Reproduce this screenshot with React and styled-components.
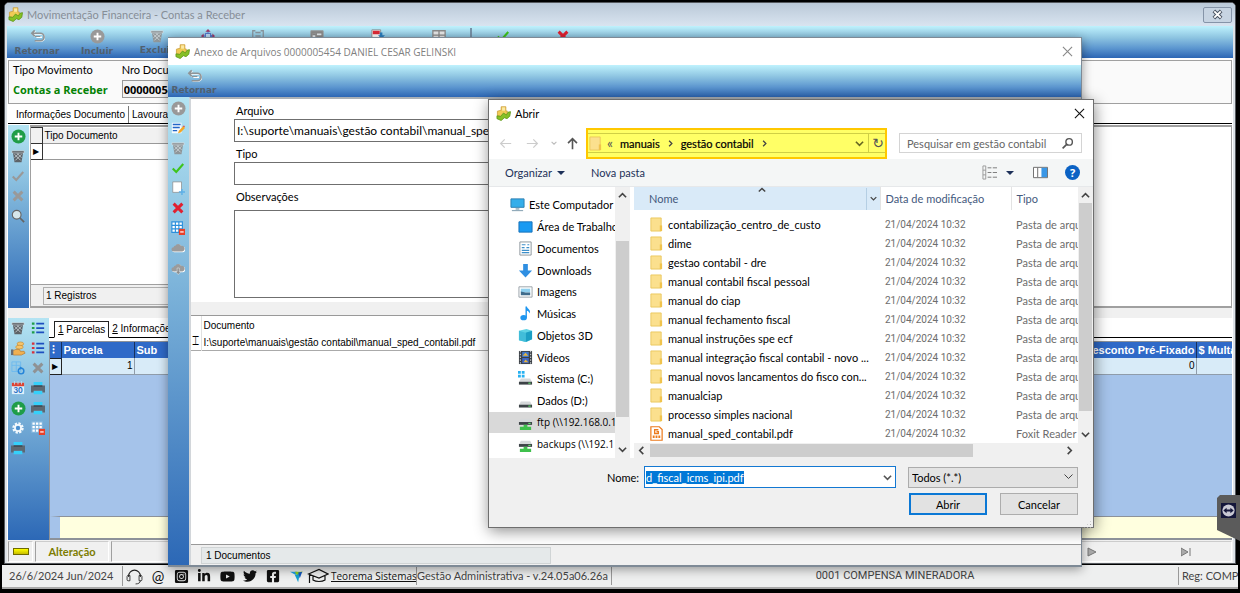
import React, { useEffect, useRef } from 'react'
import styled, { createGlobalStyle, css } from 'styled-components'
import { FaFacebookSquare, FaInstagramSquare, FaLinkedinIn, FaTwitter, FaYoutube } from 'react-icons/fa'

const FONTS = {
  UI: 'Lato, "Open Sans", sans-serif',
  DATA: 'Roboto, "Open Sans", sans-serif',
  FORM: '"Open Sans", "Noto Sans", sans-serif',
  GRID: '"Liberation Sans", Arial, sans-serif',
  TOOLBAR: '"DejaVu Sans", Verdana, sans-serif',
}

const COLORS = {
  FACE: '#f0f0f0',
  LINE: '#a0a0a0',
  GRADIENT: 'linear-gradient(#bff2fd 0%, #8fc6e2 35%, #5b95cf 70%, #2c66b4 100%)',
  SIDE_GRADIENT: 'linear-gradient(#b4e4f3, #7db4da 40%, #2c68b6)',
}

const GlobalStyle = createGlobalStyle`
  * {
    box-sizing: border-box;
  }

  body {
    margin: 0;
    background: #000;
    font-family: ${FONTS.UI};
    font-size: 11px;
    color: #000;
    overflow: hidden;
  }

  button, input, select, textarea {
    font: inherit;
    color: inherit;
    border-radius: 0;
    margin: 0;
  }
`

/* ---------- icons ---------- */

const Svg = ({ size = 14, box = 16, children }) => (
  <svg width={size} height={size} viewBox={`0 0 ${box} ${box}`} fill="none" aria-hidden="true">{children}</svg>
)

const LogoIcon = () => (
  <Svg size={15}>
    <path d="M5.500 .8h5v4.500H12v4l-5 2.500-5.500-1.500V5.500l4-1z" fill="#f0cb55" stroke="#c99a35" strokeWidth=".8" />
    <path d="M6.500 1.500h3.200V5H6.500z" fill="#fbe9a5" />
    <path d="M1 10.500l4 .5 3-3.500 3 2 2-3 2.500-.5-.8 5-3 2.500-2.700-1-3.500 3L1 13.500z" fill="#86c026" stroke="#5b9416" strokeWidth=".8" />
  </Svg>
)

const UndoIcon = () => (
  <Svg size={15}>
    <path d="M2 4.500h9a3.200 3.200 0 0 1 0 7.500H5M5 1.500L2 4.500l3 3M12 8H6" stroke="#fff" strokeWidth="1.500" transform="translate(.8 .8)" />
    <path d="M2 4.500h9a3.500 3.500 0 0 1 0 8H5M5 1.500L2 4.500l3 3" stroke="#8f9496" strokeWidth="1.800" />
    <path d="M5 8h6" stroke="#8f9496" strokeWidth="1.200" />
  </Svg>
)

const PlusIcon = ({ color = '#1f9d48' }) => (
  <Svg size={15}>
    <circle cx="8" cy="8" r="7.500" fill={color} />
    <path d="M8 4v8M4 8h8" stroke="#fff" strokeWidth="2" />
  </Svg>
)

const TrashIcon = ({ color = '#5d6368' }) => (
  <Svg>
    <path d="M2 3h12l-2 12H4z" fill={color} />
    <path d="M1 2h14v2.500H1z" fill={color} stroke="#e6eef2" strokeWidth=".6" />
    <path d="M4 6l7 7M7 5l5 5M12 6l-7 7M9 5l-5 5" stroke="#dfe7ea" strokeWidth=".8" />
  </Svg>
)

const CheckIcon = ({ color = '#3ec41c' }) => (
  <Svg>
    <path d="M2 8.500l4 4 8-9" stroke={color} strokeWidth="2.400" />
  </Svg>
)

const CrossIcon = ({ color = '#e02030' }) => (
  <Svg>
    <path d="M3 3l10 10M13 3L3 13" stroke={color} strokeWidth="3.400" />
  </Svg>
)

const SearchIcon = ({ flip }) => (
  <Svg size={flip ? 13 : 14}>
    {flip ? (
      <>
        <circle cx="10" cy="6" r="4" stroke="#555" strokeWidth="1.700" />
        <path d="M7 9l-5 5" stroke="#555" strokeWidth="2" />
      </>
    ) : (
      <>
        <circle cx="6.500" cy="6.500" r="5" fill="#d6e6ea" stroke="#666" strokeWidth="1.300" />
        <path d="M10 10l5 5" stroke="#666" strokeWidth="2" />
      </>
    )}
  </Svg>
)

const ListIcon = ({ color }) => (
  <Svg>
    <path d="M1 3h3M1 8h3M1 13h3" stroke={color} strokeWidth="2.400" />
    <path d="M6 3h9M6 8h9M6 13h9" stroke="#1d4fc0" strokeWidth="2" />
  </Svg>
)

const CoinsIcon = () => (
  <Svg size={15}>
    <ellipse cx="10" cy="3" rx="3.500" ry="2" fill="#f6c46b" stroke="#c88a2c" strokeWidth=".7" />
    <ellipse cx="9" cy="6.500" rx="4" ry="2" fill="#f6c46b" stroke="#c88a2c" strokeWidth=".7" />
    <path d="M1 10h2l2-1h4l1 2h4l1 2-4 2H3l-2-1z" fill="#f0b050" stroke="#b9772a" strokeWidth=".7" />
    <path d="M0 9h2.500v6H0z" fill="#6a6f75" />
  </Svg>
)

const GridIcon = ({ color = '#2b8fdc' }) => (
  <Svg>
    <path d="M1 1h12v12H1z" fill="#fff" stroke={color} strokeWidth="1.300" />
    <path d="M1 5h12M1 9h12M5 1v12M9 1v12" stroke={color} strokeWidth="1.300" />
    <path d="M9 9h7v7H9z" fill="#e8402a" />
    <path d="M10.500 12.500h4" stroke="#fff" strokeWidth="1.400" />
  </Svg>
)

const RefreshGridIcon = () => (
  <Svg>
    <path d="M1 1h10v11H1zM1 5h10M6 1v11" stroke="#6db9ee" />
    <circle cx="11.500" cy="11.500" r="3.200" stroke="#2584d8" strokeWidth="1.600" />
    <path d="M10 6l3 2-3 2z" fill="#2584d8" />
  </Svg>
)

const CalendarIcon = () => (
  <Svg size={14}>
    <path d="M1 2h14v13H1z" fill="#dff0fb" />
    <path d="M1 2h14v4H1z" fill="#dd4433" />
    <path d="M4 0v4M8 0v4M12 0v4" stroke="#b9d9ea" />
    <text x="8" y="13.500" textAnchor="middle" fontFamily="Inter" fontWeight="700" fontSize="8" fill="#1f6fc4">30</text>
  </Svg>
)

const PrinterIcon = () => (
  <Svg>
    <path d="M3 1h10v4H3zM3 11h10v4H3z" fill="#35d0fa" />
    <path d="M0 5h16v8h-3v-2H3v2H0z" fill="#5d6872" />
    <path d="M3 5h10v1.500H3z" fill="#39434d" />
  </Svg>
)

const GearIcon = () => (
  <Svg>
    <circle cx="8" cy="8" r="5" stroke="#f2f8fc" strokeWidth="3" strokeDasharray="2.500 1.400" />
    <circle cx="8" cy="8" r="3.500" stroke="#f2f8fc" strokeWidth="2" />
    <circle cx="8" cy="8" r="2.200" fill="#4a8fd0" />
  </Svg>
)

const EditIcon = () => (
  <Svg>
    <path d="M1 2h11v12H1z" fill="#f6fbfe" />
    <path d="M2 4h9M2 7.500h8M2 11h5" stroke="#2166c8" strokeWidth="1.600" />
    <path d="M8 14l1-3 5-5 2 2-5 5z" fill="#f5a623" />
    <path d="M13 6l2-1 1 2z" fill="#e03a2f" />
  </Svg>
)

const PageIcon = () => (
  <Svg>
    <path d="M2 1h10v12H2z" fill="#fff" stroke="#888" strokeWidth=".8" />
    <path d="M12.500 9v7M9 12.500h7" stroke="#5db0e8" strokeWidth="1.600" />
  </Svg>
)

const CloudIcon = ({ down }) => (
  <Svg>
    <path d="M3 12a2.500 2.500 0 0 1 0-5 2 2 0 0 1 2-1.500 3.500 3.500 0 0 1 6.500 0A3.200 3.200 0 0 1 13 12z" fill="#fff" transform="translate(.8 .8)" />
    <path d="M3 12a2.500 2.500 0 0 1 0-5 2 2 0 0 1 2-1.500 3.500 3.500 0 0 1 6.500 0A3.200 3.200 0 0 1 13 12z" fill="#9b9b9b" />
    {down && <path d="M7 8h2.500v4h2l-3.200 3.500L5 12h2z" fill="#8d8d8d" stroke="#e4eef4" strokeWidth=".6" />}
  </Svg>
)

const MoveIcon = () => (
  <Svg>
    <path d="M8 1v14M1 8h14" stroke="#3c5fc0" strokeWidth="1.500" strokeDasharray="3 2" />
    <path d="M8 0l3 3H5zM0 8l3-3v6zM16 8l-3-3v6z" fill="#a03a68" />
    <path d="M5 5h6v6H5z" fill="#bcdcf4" stroke="#3c5fc0" />
  </Svg>
)

const SheetIcon = ({ kind }) => (
  <Svg>
    {kind === 'save' && <path d="M5 2H2v12h3M11 2h3v12h-3M5 4h6M5 8h6" stroke="#8a97a0" strokeWidth="1.500" />}
    {kind === 'form' && <path d="M1 2h14v12H1zM3 5h4v4H3zM9 6h4" fill="#8a8a8a" stroke="#999" />}
    {kind === 'form' && <path d="M3 8h3M8 6h5M8 10h3" stroke="#e8eef2" strokeWidth="2" />}
    {kind === 'report' && <path d="M1 1h10v14H1z" fill="#fff" stroke="#888" />}
    {kind === 'report' && <path d="M2 2h8v4H2z" fill="#e02a36" />}
    {kind === 'report' && <path d="M10 4h3v3h3l-4 4-4-4h2z" fill="#2a7fc0" />}
    {kind === 'grid' && <path d="M1 2h14v12H1zM1 7h14M8 2v12" fill="#e9e9e9" stroke="#8b8b8b" strokeWidth="1.500" />}
  </Svg>
)

const FolderIcon = () => (
  <Svg size={15}>
    <path d="M2 1h11v14H2z" fill="#fbe08e" stroke="#e9c558" strokeWidth=".9" />
    <path d="M11.500 9H14v6h-2.500z" fill="#f0c34c" />
  </Svg>
)

const PdfIcon = () => (
  <Svg size={15}>
    <path d="M2 .8h9l3 3v11.400H2z" fill="#fff" stroke="#ec7a1c" strokeWidth="1.300" />
    <path d="M10 4H6v4h4V6H8" stroke="#ec7a1c" strokeWidth="1.400" />
    <path d="M4 11.500h8" stroke="#ec7a1c" strokeWidth="2.600" strokeDasharray="2 1" />
  </Svg>
)

const DRIVE = (
  <>
    <path d="M3 6h10l2 4H1z" fill="#d5d8da" />
    <path d="M1 9.500h14v3H1z" fill="#3c4246" />
    <path d="M11 11h2.500" stroke="#5fe06a" strokeWidth="1.200" />
  </>
)

const TREE_ICONS = {
  pc: (
    <>
      <path d="M1 2h14v9H1z" fill="#35aeea" stroke="#2b7eb0" />
      <path d="M6 12h4v1.500H6z" fill="#89a6b5" />
      <path d="M2 14.500h12" stroke="#8fa9b8" strokeWidth="1.200" />
    </>
  ),
  desktop: <path d="M1 3h14v11H1z" fill="#1a9af2" stroke="#1670b8" />,
  docs: (
    <>
      <path d="M2 1h12v14H2z" fill="#fff" stroke="#8b949a" />
      <path d="M4 4h4M4 7h3M9 7h3M4 10h8M4 12.500h8M10 4h2" stroke="#3d8fc9" strokeWidth="1.300" />
    </>
  ),
  down: <path d="M5.500 1h5v7H15l-7 7.500L1 8h4.500z" fill="#2f8fe2" />,
  image: (
    <>
      <path d="M1 3h14v11H1z" fill="#fff" stroke="#98a1a7" />
      <path d="M3 5h10v4H3z" fill="#8fd0ef" />
      <path d="M3 8l5 1 5 0v3H3z" fill="#3f6c8c" />
    </>
  ),
  music: (
    <>
      <ellipse cx="6" cy="12.500" rx="3.500" ry="2.800" fill="#1e96f0" />
      <path d="M8 .5h1.500c.5 3 4.500 3 3 7.500-.6-2-1.500-2.500-3-3v7.500H8z" fill="#1e96f0" />
    </>
  ),
  cube: (
    <>
      <path d="M1 3l8-2 6 2v9l-6 3-8-2z" fill="#5fd3e4" />
      <path d="M8 5l7-2v9l-7 3z" fill="#1c9fc4" />
      <path d="M1 3l7 2v10l-7-2z" fill="#41bdd9" />
    </>
  ),
  video: (
    <>
      <path d="M1 1h14v14H1z" fill="#3b4046" />
      <path d="M2.500 1v14M13.500 1v14" stroke="#dfe3e6" strokeDasharray="1.500 1.500" />
      <path d="M4.500 2h7v5.500h-7z" fill="#4379cc" />
      <path d="M4.500 8.500h7V14h-7z" fill="#3e66c4" />
      <path d="M5 6l3-3 3 3zM6 13l2-3 3 3z" fill="#e7b53c" />
    </>
  ),
  system: (
    <>
      <g transform="translate(0 2)">{DRIVE}</g>
      <path d="M0 0h3v3H0zM4 0h3v3H4zM0 4h3v3H0zM4 4h3v3H4z" fill="#27b1f1" />
    </>
  ),
  drive: <g transform="translate(0 3)">{DRIVE}</g>,
  net: (
    <>
      <g transform="translate(0 -2)">{DRIVE}</g>
      <path d="M6 10.500h4v2h4V16H2v-3.500h4z" fill="#3fc04c" />
    </>
  ),
}

const Chevron = ({ dir = 'down', color = '#444', size = 9 }) => {
  const d = {
    down: 'M1 3l4 4 4-4',
    up: 'M1 7l4-4 4 4',
    left: 'M7 1L3 5l4 4',
    right: 'M3 1l4 4-4 4',
  }[dir]
  return <Svg size={size} box={10}><path d={d} stroke={color} strokeWidth="1.800" /></Svg>
}

const ArrowIcon = ({ dir, color }) => (
  <Svg size={13}>
    {dir === 'left' && <path d="M15 8H2M7 3L2 8l5 5" stroke={color} strokeWidth="1.500" />}
    {dir === 'right' && <path d="M1 8h13M9 3l5 5-5 5" stroke={color} strokeWidth="1.500" />}
    {dir === 'up' && <path d="M8 15V2M2.500 7.500L8 2l5.500 5.500" stroke={color} strokeWidth="2" />}
  </Svg>
)

const CloseIcon = ({ color }) => (
  <Svg size={11} box={12}><path d="M1 1l10 10M11 1L1 11" stroke={color} strokeWidth="1.200" /></Svg>
)

const HeadsetIcon = () => (
  <Svg size={17}>
    <path d="M2.500 8.500v-1a5.500 5.500 0 0 1 11 0v1" stroke="#222" />
    <path d="M1.500 7h2.200v5H2a1 1 0 0 1-1-1V8zM14.500 7h-2.200v5H14a1 1 0 0 0 1-1V8zM13.500 12c0 2-2 3-4.500 3" stroke="#222" strokeWidth=".8" />
  </Svg>
)

const BirdIcon = () => (
  <Svg size={13}>
    <path d="M0 2h9l-2 4z" fill="#21a0e8" />
    <path d="M6 2h10l-7 6z" fill="#8ed321" />
    <path d="M6 6l6-1-2 10z" fill="#15a0d0" />
    <path d="M10 3l5-1-3 8z" fill="#1456c0" />
  </Svg>
)

const GraduationIcon = () => (
  <svg width="22" height="17" viewBox="0 0 22 17" fill="none" aria-hidden="true">
    <path d="M1.500 6L12 1.500 21 6l-9 4zM6 8v4c3 2 9 2 12 0V8M2.500 6.500V15" stroke="#111" strokeWidth="1.200" />
  </svg>
)

const ViewIcon = () => (
  <Svg size={15}>
    <path d="M1 1h3v14H1zM1 5.500h3M1 10.500h3" stroke="#999" />
    <path d="M6 3h4M11.500 3H16M6 8h4M11.500 8H16M6 13h4M11.500 13H16" stroke="#777" />
  </Svg>
)

const PreviewIcon = () => (
  <Svg size={15}>
    <path d="M.5 2.500h15v11H.5zM5 3v10" fill="#fff" stroke="#666" />
    <path d="M9 3h6v10H9z" fill="#3a97e6" />
  </Svg>
)

/* ---------- main window ---------- */

const Page = styled.div`
  display: flex;
  flex-direction: column;
  min-height: 100vh;
  padding: 2px 2px 4px;
  overflow: hidden;
`

const MainWindow = styled.main`
  display: flex;
  flex-direction: column;
  flex: 1;
  margin: 0 2px;
  padding: 0 2px;
  border: 1px solid #55595e;
  border-radius: 5px 5px 0 0;
  background: #dde2e7;
  overflow: hidden;
`

const MainTitle = styled.header`
  display: flex;
  align-items: center;
  gap: 4px;
  height: 23px;
  margin: 0 -2px;
  padding: 0 3px;
  background: linear-gradient(#bac9d8, #d9e4f0);
  color: #868e97;

  h1 {
    flex: 1;
    margin: 0;
    font-size: 11px;
    font-weight: 400;
  }
`

const MainClose = styled.button`
  display: flex;
  align-items: center;
  justify-content: center;
  width: 29px;
  height: 16px;
  padding: 0;
  border: 1px solid #8594a8;
  border-radius: 2px;
  background: #c7d4e2;
`

const Toolbar = styled.div`
  display: flex;
  flex: none;
  height: 32px;
  background: ${COLORS.GRADIENT};
`

const ToolButton = styled.button`
  display: flex;
  flex: none;
  flex-direction: column;
  align-items: center;
  gap: ${p => (p.$low ? 0 : 1)}px;
  width: ${p => p.$width || 60}px;
  padding: ${p => (p.$low ? 4 : 3)}px 0 0;
  border: 0;
  background: none;
  font: 700 9px/12px ${FONTS.TOOLBAR};
  color: #50606f;
`

const ToolDivider = styled.span`
  align-self: center;
  width: 2px;
  height: 28px;
  margin: 0 1px;
  background: #7792a8;
`

const Body = styled.div`
  display: flex;
  flex: 1;
  flex-direction: column;
  padding: 0 1px;
  background: #fff;
`

const FilterPanel = styled.section`
  display: flex;
  gap: 14px;
  height: 44px;
  margin-top: 2px;
  padding: 2px 4px;
  border: 1px solid ${COLORS.LINE};
  background: #fafafa;
`

const FilterField = styled.div`
  display: flex;
  flex-direction: column;
  gap: 3px;
  font: 11px/14px ${FONTS.UI};

  output {
    padding-top: 1px;
    font: 700 11px/18px ${FONTS.FORM};
    color: #058205;
  }

  input {
    width: 100px;
    height: 18px;
    padding: 0 1px;
    border: 1px solid #999;
    background: #f3f3f3;
    font: 700 11px ${FONTS.FORM};
  }
`

const Tabs = styled.nav`
  display: flex;
  align-items: flex-end;
  height: 20px;
  padding-left: ${p => (p.$boxed ? 5 : 0)}px;
  border-bottom: 1px solid #000;
  font: 10px/15px ${FONTS.GRID};
`

const Tab = styled.button`
  height: 17px;
  padding: 0 3px 0 ${p => (p.$boxed ? 3 : 8)}px;
  border: 0;
  background: none;
  white-space: nowrap;

  ${p => p.$active && !p.$boxed && css`
    border-right: 1px solid #777;
  `}

  ${p => p.$active && p.$boxed && css`
    margin-bottom: -1px;
    padding: 0 3px;
    border: 1px solid #222;
    border-bottom-color: #fff;
    background: #fff;
  `}

  & + & {
    padding-left: 3px;
  }
`

const SideBar = styled.div`
  display: grid;
  flex: none;
  grid-template-columns: repeat(${p => p.$columns || 1}, 20px);
  grid-auto-rows: 20px;
  align-content: start;
  padding: ${p => (p.$columns ? 0 : 1)}px 1px 0 0;
  background: ${COLORS.SIDE_GRADIENT};
`

const SideButton = styled.button`
  display: flex;
  align-items: center;
  justify-content: center;
  padding: 0;
  border: 0;
  background: none;
`

const Upper = styled.section`
  display: flex;
  flex: none;
  height: 183px;
  margin-top: 1px;
`

const UpperGrid = styled.div`
  display: flex;
  flex: 1;
  flex-direction: column;
  margin-left: 1px;
  border: 1px solid ${COLORS.LINE};
  border-width: 2px 1px;
`

const Records = styled.div`
  display: flex;
  align-items: center;
  height: 22px;
  margin-top: auto;
  padding: 0 12px;
  border-top: 1px solid ${COLORS.LINE};
  background: ${COLORS.FACE};

  span {
    flex: 1;
    padding: 0 2px;
    border: 1px solid #b0b0b0;
    font: 10px/16px ${FONTS.GRID};
  }
`

const PlainTable = styled.table`
  width: 100%;
  border-collapse: collapse;
  table-layout: fixed;
  font: 10px/15px ${FONTS.GRID};
  white-space: nowrap;

  th, td {
    height: 16px;
    padding: 0 2px;
    border-bottom: 1px solid #999;
    text-align: left;
    font-weight: 400;
    overflow: hidden;
  }

  thead th {
    background: #f1f1f1;
  }

  th:first-child, td:first-child {
    width: 11px;
    padding: 0;
    border: 1px solid #333;
    border-left: 0;
    font-size: 8px;
    text-align: center;
  }
`

const Splitter = styled.div`
  flex: none;
  height: 10px;
  background: ${COLORS.FACE};
`

const Lower = styled.section`
  display: flex;
  flex: 1;
`

const LowerMain = styled.div`
  display: flex;
  flex: 1;
  flex-direction: column;
  min-width: 0;
`

const Installments = styled.div`
  display: flex;
  flex: 1;
  flex-direction: column;
  margin-top: 3px;
  border: 1px solid #8d9299;
  border-width: 1px 0 2px 1px;
  background: #a5c3ea;
`

const BlueTable = styled.table`
  width: 100%;
  border-collapse: collapse;
  table-layout: fixed;
  font: 10px/15px ${FONTS.GRID};
  white-space: nowrap;

  th, td {
    height: 16px;
    padding: 0 1px 0 2px;
    border-right: 1px solid #8f9caa;
    text-align: left;
    overflow: hidden;
  }

  th {
    background: #2f6ac8;
    border-right-color: #16305c;
    font: 700 11px/15px ${FONTS.GRID};
    color: #fff;
  }

  th:nth-child(4) {
    text-align: right;
    direction: rtl;
  }

  td {
    background: #d8ebf8;
    border-bottom: 1px solid #8f9caa;
    text-align: right;
  }

  td:first-child {
    padding: 0;
    border: 1px solid #222;
    border-left: 0;
    font-size: 8px;
    text-align: center;
  }

  th:last-child, td:last-child {
    border-right: 0;
  }
`

const Col = styled.col`
  width: ${p => (p.$width ? p.$width + 'px' : 'auto')};
`

const Totals = styled.div`
  height: 22px;
  margin-top: auto;
  border-top: 1px solid #8d9299;
  border-left: 10px solid #a5c3ea;
  background: #ffffdf;
`

const StateBar = styled.footer`
  display: flex;
  align-items: center;
  gap: 2px;
  height: 23px;
  margin: 0 -1px;
  padding: 0 1px;
  background: ${COLORS.FACE};
`

const Cell = styled.div`
  display: flex;
  flex: ${p => (p.$width ? 'none' : 1)};
  align-items: center;
  justify-content: center;
  width: ${p => p.$width}px;
  height: 21px;
  border: 1px solid #fff;
  border-left-color: ${COLORS.LINE};
  border-top-color: #ccc;
  font: 700 11px ${FONTS.UI};
  color: #7c7c00;
`

const YellowLed = styled.span`
  width: 16px;
  height: 7px;
  border: 1px solid #6f6a00;
  background: linear-gradient(#ffff00, #c8bd00);
`

const Player = styled.div`
  display: flex;
  gap: 84px;
  margin-left: auto;
  padding-right: 40px;
`

/* ---------- status bar ---------- */

const StatusBar = styled.footer`
  display: flex;
  align-items: center;
  height: 24px;
  margin-top: 1px;
  border-bottom: 2px solid #a8a8a8;
  background: #eeefef;
  color: #444;
  white-space: nowrap;
`

const StatusCell = styled.div`
  flex: ${p => (p.$grow ? 1 : 'none')};
  width: ${p => p.$width}px;
  padding-left: ${p => p.$pad || 0}px;
  border-left: ${p => (p.$first ? 0 : 1)}px solid #999;
  font-family: ${p => (p.$grow ? FONTS.DATA : FONTS.UI)};
  line-height: 18px;
  text-align: ${p => (p.$grow ? 'center' : 'left')};
  overflow: hidden;
`

const Social = styled.div`
  display: flex;
  align-items: center;
  gap: 7px;
  padding: 0 0 0 3px;
  border-left: 1px solid #999;
  color: #111;

  a {
    display: flex;
    align-items: center;
    justify-content: center;
    min-width: 16px;
    color: inherit;
    text-decoration: none;
    font: 15px/20px ${FONTS.UI};
  }

  a:last-child {
    margin-left: -4px;
  }
`

const CompanyLink = styled.a`
  width: 87px;
  padding: 0 0 0 2px;
  color: #111;
  font: 10px/18px ${FONTS.FORM};
`

const RemoteHandle = styled.button`
  position: absolute;
  right: 0;
  top: 495px;
  display: flex;
  width: 23px;
  height: 46px;
  padding: 8px 4px;
  border: 0;
  background: #5b5b5b;
  clip-path: polygon(0 3px, 3px 0, 100% 0, 100% 100%, 0 76%);
`

/* ---------- attachment window ---------- */

const AttachWindow = styled.section`
  position: absolute;
  left: 168px;
  right: 158px;
  top: 37px;
  bottom: 26px;
  display: flex;
  flex-direction: column;
  border: 1px solid #7e8a96;
  border-left: 0;
  border-bottom-width: 2px;
  background: #fff;
  box-shadow: 0 2px 10px rgba(0, 0, 0, .4);
`

const WindowTitle = styled.header`
  display: flex;
  flex: none;
  align-items: center;
  gap: 4px;
  height: 27px;
  padding: 0 8px 0 7px;
  color: ${p => (p.$muted ? '#808080' : '#000')};

  h2 {
    flex: 1;
    margin: 0;
    font: 400 ${p => (p.$muted ? 10 : 11)}px ${p => (p.$muted ? FONTS.FORM : FONTS.UI)};
  }
`

const GhostButton = styled.button`
  display: flex;
  align-items: center;
  justify-content: center;
  padding: 0;
  border: 0;
  background: none;
`

const AttachBody = styled.div`
  display: flex;
  flex: 1;
  min-height: 0;
`

const AttachMain = styled.div`
  display: flex;
  flex: 1;
  flex-direction: column;
  min-width: 0;
  border-top: 2px solid #aab0b6;
  border-left: 2px solid #d2d6da;
`

const AttachForm = styled.form`
  display: flex;
  flex-direction: column;
  height: 203px;
  padding: 3px 24px 4px 43px;
`

const FieldLabel = styled.label`
  padding-left: 2px;
  font: 11px/17px ${FONTS.UI};
`

const fieldBox = css`
  flex: none;
  padding: 0 2px;
  border: 1px solid #6f6f6f;
  background: #fff;
  font: 12px ${FONTS.UI};
`

const TextField = styled.input`
  ${fieldBox}
  height: 23px;
  margin-bottom: 3px;
`

const TextArea = styled.textarea`
  ${fieldBox}
  height: 88px;
  margin-top: 5px;
  resize: none;
`

const GrayBand = styled.div`
  flex: none;
  height: 14px;
  border-bottom: 1px solid #999;
  background: ${COLORS.FACE};
`

const FileTable = styled.table`
  width: 100%;
  border-collapse: collapse;
  font: 10px/15px ${FONTS.GRID};

  th, td {
    height: 16px;
    padding: 2px 2px 0;
    text-align: left;
    font-weight: 400;
  }

  tbody tr {
    border-bottom: 1px solid #aaa;
  }

  td:first-child, th:first-child {
    width: 10px;
    padding: 0;
    border-right: 1px solid #e0e0e0;
    font: 12px/15px ${FONTS.GRID};
    text-align: center;
  }
`

const DocCount = styled.div`
  display: flex;
  margin-top: auto;
  padding: 2px 10px 1px;
  border-top: 1px solid #999;
  background: ${COLORS.FACE};

  span {
    width: 350px;
    padding: 0 4px;
    border: 1px solid #d0d4d5;
    background: #e5e9ea;
    font: 10px/15px ${FONTS.GRID};
  }
`

/* ---------- open file dialog ---------- */

const OpenDialog = styled.section`
  position: absolute;
  left: 488px;
  right: 146px;
  top: 99px;
  bottom: 65px;
  display: flex;
  flex-direction: column;
  border: 1px solid #6e6e6e;
  background: #fff;
  box-shadow: 1px 3px 14px rgba(0, 0, 0, .45);
`

const NavRow = styled.div`
  display: flex;
  flex: none;
  align-items: center;
  height: 32px;
  padding: 0 11px 0 10px;
`

const NavArrows = styled.div`
  display: flex;
  align-items: center;
  gap: 14px;
  width: 87px;

  button:nth-child(3) {
    margin: 0 -5px 0 -2px;
  }
`

const AddressBar = styled.div`
  display: flex;
  flex: 1;
  align-items: center;
  height: 31px;
  border: 2px solid #ffc800;
  background: #ffff66;
`

const AddressInner = styled.div`
  display: flex;
  flex: 1;
  align-items: center;
  gap: 7px;
  height: 20px;
  border: 1px solid #cfcf45;
  border-width: 1px 0;

  b {
    font-weight: 400;
    -webkit-text-stroke: .2px #000;
  }

  > svg:first-child {
    margin: 0 -3px 0 0;
  }
`

const Parents = styled.span`
  font: 14px/16px ${FONTS.UI};
  color: #555;
`

const RefreshButton = styled.button`
  width: 17px;
  height: 18px;
  margin-left: -3px;
  padding: 0 0 0 2px;
  border: 0;
  border-left: 1px solid #cfcf45;
  background: none;
  font: 14px/14px "DejaVu Sans", sans-serif;
  color: #555;
`

const Spacer = styled.span`
  flex: 1;
`

const SearchBox = styled.label`
  display: flex;
  align-items: center;
  width: 183px;
  height: 20px;
  margin-left: 12px;
  padding: 0 7px;
  border: 1px solid #d4d4d4;

  input {
    flex: 1;
    min-width: 0;
    padding: 0;
    border: 0;
    outline: 0;
  }

  input::placeholder {
    color: #666;
    opacity: 1;
  }
`

const CommandBar = styled.div`
  display: flex;
  flex: none;
  align-items: center;
  height: 28px;
  padding: 0 13px 0 16px;
  border-bottom: 1px solid #e6e8ea;
  background: #f4f6f6;
  color: #1d3159;
`

const Command = styled.button`
  display: flex;
  align-items: center;
  gap: ${p => p.$gap || 5}px;
  margin-right: ${p => p.$after || 0}px;
  padding: 0;
  border: 0;
  background: none;
`

const DownTriangle = styled.span`
  border: 4px solid transparent;
  border-top-color: #1d3159;
  border-bottom: 0;
`

const HelpBadge = styled.span`
  width: 15px;
  height: 15px;
  border-radius: 50%;
  background: #0b62c4;
  color: #fff;
  font: 700 11px/15px ${FONTS.FORM};
  text-align: center;
`

const Browser = styled.div`
  display: flex;
  flex: 1;
  min-height: 0;
`

const Tree = styled.ul`
  display: flex;
  flex-direction: column;
  width: 126px;
  margin: 0;
  padding: 7px 0 3px;
  list-style: none;
`

const TreeItem = styled.li`
  display: flex;
  flex: 1;
  align-items: center;
  gap: 4px;
  min-height: 0;
  padding-left: ${p => (p.$root ? 21 : 29)}px;
  background: ${p => (p.$selected ? '#d9d9d9' : 'none')};
  font: ${p => (p.$address ? `10px ${FONTS.FORM}` : `11px ${FONTS.UI}`)};
  white-space: nowrap;
  overflow: hidden;

  svg {
    flex: none;
  }
`

const Scroll = styled.div`
  display: flex;
  flex: none;
  flex-direction: ${p => (p.$across ? 'row' : 'column')};
  align-items: center;
  ${p => (p.$across ? 'height: 15px;' : 'width: 15px;')}
  padding: ${p => (p.$across ? '0 3px' : '4px 0')};
  background: ${COLORS.FACE};
`

const Thumb = styled.span`
  flex: ${p => p.$length};
  align-self: stretch;
  margin: ${p => (p.$across ? '1px 0 1px 4px' : '3px 1px 0')};
  background: #cdcdcd;
`

const Rest = styled.span`
  flex: ${p => p.$length};
`

const Listing = styled.div`
  display: flex;
  flex: 1;
  flex-direction: column;
  min-width: 0;
  margin-left: 4px;
`

const ListingTop = styled.div`
  display: flex;
  flex: 1;
  min-height: 0;
`

const ListingClip = styled.div`
  flex: 1;
  min-width: 0;
  overflow: hidden;
`

const FilesTable = styled.table`
  width: 100%;
  border-collapse: collapse;
  table-layout: fixed;
  white-space: nowrap;

  th {
    height: 23px;
    padding: 0 5px;
    border-right: 1px solid #e3e3e3;
    text-align: left;
    font-weight: 400;
    color: #44597d;
  }

  th:first-child {
    padding: 0 0 0 15px;
    background: #d9eaf8;
  }

  th:last-child {
    border-right: 0;
  }

  thead::after {
    content: '';
    display: block;
    height: 5px;
  }

  td {
    height: 19px;
    padding: 0 5px;
    color: #6d6d6d;
    overflow: hidden;
  }

  td:nth-child(2) {
    font: 10px ${FONTS.DATA};
  }
`

const NameHead = styled.span`
  display: flex;
  align-items: center;
  height: 22px;

  > svg {
    align-self: flex-start;
    margin: -2px auto 0 80px;
  }

  button {
    width: 14px;
    height: 22px;
    border-left: 1px solid #b5cfe4;
  }
`

const FileName = styled.span`
  display: flex;
  align-items: center;
  gap: 4px;
  margin-left: 10px;
  color: #000;
`

const DialogFooter = styled.form`
  display: grid;
  flex: none;
  grid-template-columns: 150px 1fr 170px;
  grid-auto-rows: 22px;
  row-gap: 5px;
  align-content: start;
  height: 69px;
  padding: 8px 15px 0 0;
  background: ${COLORS.FACE};
`

const NameLabel = styled.label`
  align-self: center;
  text-align: right;
`

const NameCombo = styled.div`
  display: flex;
  align-items: center;
  margin: 0 12px 0 5px;
  padding-right: 3px;
  border: 1px solid #1378d2;
  background: #fff;
  min-width: 0;

  input {
    flex: 1;
    min-width: 0;
    height: 14px;
    padding: 0 1px;
    border: 0;
    outline: 0;
  }

  input::selection {
    background: #0078d7;
    color: #fff;
  }
`

const TypeSelect = styled.select`
  align-self: center;
  height: 21px;
  padding: 0 3px;
  border: 1px solid #acacac;
  background: #e3e3e3 url("data:image/svg+xml,%3Csvg xmlns='http://www.w3.org/2000/svg' width='9' height='6' fill='none'%3E%3Cpath d='M.5 .5l4 4 4-4' stroke='%23444'/%3E%3C/svg%3E") no-repeat right 4px center;
  appearance: none;
`

const DialogButtons = styled.div`
  display: flex;
  grid-column: 2 / 4;
  justify-content: flex-end;
  gap: 13px;
`

const DialogButton = styled.button`
  width: 78px;
  padding: 0;
  border: ${p => (p.$primary ? '2px solid #0b78d5' : '1px solid #adadad')};
  background: #e2e2e2;
`

const Grip = styled.span`
  align-self: start;
  justify-self: end;
  grid-column: 3;
  width: 9px;
  height: 9px;
  margin-right: -14px;
  background: radial-gradient(circle, #aaa 1px, transparent 1px) 0 0 / 3px 3px;
  clip-path: polygon(100% 0, 100% 100%, 0 100%);
`

const SIDE_TOOLS = [
  ['Incluir', <PlusIcon color="#999" />],
  ['Editar', <EditIcon />],
  ['Excluir', <TrashIcon color="#8f9699" />],
  ['Confirmar', <CheckIcon />],
  ['Novo', <PageIcon />],
  ['Cancelar', <CrossIcon />],
  ['Grade', <GridIcon />],
  ['Nuvem', <CloudIcon />],
  ['Baixar', <CloudIcon down />],
]

const UPPER_TOOLS = [
  ['Incluir documento', <PlusIcon />],
  ['Excluir documento', <TrashIcon />],
  ['Confirmar documento', <CheckIcon color="#999" />],
  ['Cancelar documento', <CrossIcon color="#999" />],
  ['Pesquisar', <SearchIcon />],
]

const LOWER_TOOLS = [
  ['Excluir parcela', <TrashIcon />],
  ['Lista verde', <ListIcon color="#1f9d48" />],
  ['Receber', <CoinsIcon />],
  ['Lista vermelha', <ListIcon color="#d8303a" />],
  ['Atualizar', <RefreshGridIcon />],
  ['Cancelar parcela', <CrossIcon color="#8f9294" />],
  ['Vencimento', <CalendarIcon />],
  ['Imprimir boleto', <PrinterIcon />],
  ['Incluir parcela', <PlusIcon />],
  ['Imprimir recibo', <PrinterIcon />],
  ['Configurar', <GearIcon />],
  ['Configurar grade', <GridIcon color="#7fb4dd" />],
  ['Imprimir', <PrinterIcon />],
]

const TREE = [
  ['pc', 'Este Computador'],
  ['desktop', 'Área de Trabalho'],
  ['docs', 'Documentos'],
  ['down', 'Downloads'],
  ['image', 'Imagens'],
  ['music', 'Músicas'],
  ['cube', 'Objetos 3D'],
  ['video', 'Vídeos'],
  ['system', 'Sistema (C:)'],
  ['drive', 'Dados (D:)'],
  ['net', 'ftp (\\\\192.168.0.1'],
  ['net', 'backups (\\\\192.1'],
]

const FILES = [
  'contabilização_centro_de_custo',
  'dime',
  'gestao contabil - dre',
  'manual contabil fiscal pessoal',
  'manual do ciap',
  'manual fechamento fiscal',
  'manual instruções spe ecf',
  'manual integração fiscal contabil - novo ...',
  'manual novos lancamentos do fisco con...',
  'manualciap',
  'processo simples nacional',
  'manual_sped_contabil.pdf',
]

const Tools = ({ items, columns }) => (
  <SideBar $columns={columns}>
    {items.map(([label, icon]) => (
      <SideButton key={label} aria-label={label}>{icon}</SideButton>
    ))}
  </SideBar>
)

const Attachments = () => (
  <AttachWindow>
    <WindowTitle $muted>
      <LogoIcon />
      <h2>Anexo de Arquivos 0000005454 DANIEL CESAR GELINSKI</h2>
      <GhostButton aria-label="Fechar anexos"><CloseIcon color="#888" /></GhostButton>
    </WindowTitle>
    <Toolbar>
      <ToolButton $width={52} $low><UndoIcon />Retornar</ToolButton>
    </Toolbar>
    <AttachBody>
      <Tools items={SIDE_TOOLS} />
      <AttachMain>
        <AttachForm>
          <FieldLabel htmlFor="arquivo">Arquivo</FieldLabel>
          <TextField id="arquivo" defaultValue="I:\suporte\manuais\gestão contabil\manual_sped_contabil.pdf" />
          <FieldLabel htmlFor="tipo">Tipo</FieldLabel>
          <TextField id="tipo" />
          <FieldLabel htmlFor="observacoes">Observações</FieldLabel>
          <TextArea id="observacoes" />
        </AttachForm>
        <GrayBand />
        <FileTable>
          <thead>
            <tr><th /><th>Documento</th></tr>
          </thead>
          <tbody>
            <tr><td>⌶</td><td>I:\suporte\manuais\gestão contabil\manual_sped_contabil.pdf</td></tr>
          </tbody>
        </FileTable>
        <DocCount><span>1 Documentos</span></DocCount>
      </AttachMain>
    </AttachBody>
  </AttachWindow>
)

const OpenFile = () => {
  const nameRef = useRef(null)

  useEffect(() => {
    nameRef.current.focus()
    nameRef.current.select()
  }, [])

  return (
    <OpenDialog>
      <WindowTitle>
        <LogoIcon />
        <h2>Abrir</h2>
        <GhostButton aria-label="Fechar"><CloseIcon color="#111" /></GhostButton>
      </WindowTitle>
      <NavRow>
        <NavArrows>
          <GhostButton aria-label="Voltar"><ArrowIcon dir="left" color="#ccc" /></GhostButton>
          <GhostButton aria-label="Avançar"><ArrowIcon dir="right" color="#ccc" /></GhostButton>
          <GhostButton aria-label="Recentes"><Chevron size={6} color="#bbb" /></GhostButton>
          <GhostButton aria-label="Acima"><ArrowIcon dir="up" color="#555" /></GhostButton>
        </NavArrows>
        <AddressBar>
          <AddressInner>
            <FolderIcon />
            <Parents>«</Parents>
            <b>manuais</b>
            <Chevron dir="right" size={7} />
            <b>gestão contabil</b>
            <Chevron dir="right" size={7} />
            <Spacer />
            <GhostButton aria-label="Locais anteriores"><Chevron color="#666622" /></GhostButton>
            <RefreshButton aria-label="Atualizar">↻</RefreshButton>
          </AddressInner>
        </AddressBar>
        <SearchBox>
          <input placeholder="Pesquisar em gestão contabil" aria-label="Pesquisar em gestão contabil" />
          <SearchIcon flip />
        </SearchBox>
      </NavRow>
      <CommandBar>
        <Command $after={26}>Organizar <DownTriangle /></Command>
        <Command>Nova pasta</Command>
        <Spacer />
        <Command $after={19} $gap={9} aria-label="Exibição"><ViewIcon /><DownTriangle /></Command>
        <Command $after={17} aria-label="Painel de visualização"><PreviewIcon /></Command>
        <Command aria-label="Ajuda"><HelpBadge>?</HelpBadge></Command>
      </CommandBar>
      <Browser>
        <Tree>
          {TREE.map(([icon, label], i) => (
            <TreeItem key={label} $root={i === 0} $selected={i === 10} $address={icon === 'net'}>
              <Svg size={15}>{TREE_ICONS[icon]}</Svg>
              {label}
            </TreeItem>
          ))}
        </Tree>
        <Scroll>
          <Chevron dir="up" />
          <Rest $length={38} />
          <Thumb $length={176} />
          <Rest $length={28} />
          <Chevron />
        </Scroll>
        <Listing>
          <ListingTop>
            <ListingClip>
              <FilesTable>
                <colgroup>
                  <Col />
                  <Col $width={131} />
                  <Col $width={67} />
                </colgroup>
                <thead>
                  <tr>
                    <th>
                      <NameHead>
                        Nome
                        <Chevron dir="up" size={8} />
                        <GhostButton aria-label="Filtrar"><Chevron size={7} /></GhostButton>
                      </NameHead>
                    </th>
                    <th>Data de modificação</th>
                    <th>Tipo</th>
                  </tr>
                </thead>
                <tbody>
                  {FILES.map(name => {
                    const isPdf = name.endsWith('.pdf')
                    return (
                      <tr key={name}>
                        <td><FileName>{isPdf ? <PdfIcon /> : <FolderIcon />}{name}</FileName></td>
                        <td>21/04/2024 10:32</td>
                        <td>{isPdf ? 'Foxit Reader' : 'Pasta de arquivos'}</td>
                      </tr>
                    )
                  })}
                </tbody>
              </FilesTable>
            </ListingClip>
            <Scroll>
              <Chevron dir="up" />
              <Thumb $length={210} />
              <Rest $length={19} />
              <Chevron />
            </Scroll>
          </ListingTop>
          <Scroll $across>
            <Chevron dir="left" />
            <Thumb $across $length={324} />
            <Rest $length={92} />
            <Chevron dir="right" />
            <Rest $length={16} />
          </Scroll>
        </Listing>
      </Browser>
      <DialogFooter onSubmit={e => e.preventDefault()}>
        <NameLabel htmlFor="nome">Nome:</NameLabel>
        <NameCombo>
          <input id="nome" ref={nameRef} defaultValue="d_fiscal_icms_ipi.pdf" />
          <Chevron color="#555" />
        </NameCombo>
        <TypeSelect aria-label="Tipo de arquivo"><option>Todos (*.*)</option></TypeSelect>
        <DialogButtons>
          <DialogButton $primary>Abrir</DialogButton>
          <DialogButton type="button">Cancelar</DialogButton>
        </DialogButtons>
        <Grip />
      </DialogFooter>
    </OpenDialog>
  )
}

const App = () => (
  <Page>
    <GlobalStyle />
    <MainWindow>
      <MainTitle>
        <LogoIcon />
        <h1>Movimentação Financeira - Contas a Receber</h1>
        <MainClose aria-label="Fechar janela">
          <Svg size={11} box={12}>
            <path d="M2 2l8 8M10 2l-8 8" stroke="#4b5563" strokeWidth="4" />
            <path d="M2.500 2.500l7 7M9.500 2.500l-7 7" stroke="#fff" strokeWidth="2" />
          </Svg>
        </MainClose>
      </MainTitle>
      <Toolbar>
        <ToolButton><UndoIcon />Retornar</ToolButton>
        <ToolButton><PlusIcon color="#999" />Incluir</ToolButton>
        <ToolButton><TrashIcon color="#8f9699" />Excluir</ToolButton>
        <ToolButton $width={42}><MoveIcon /></ToolButton>
        <ToolButton $width={58}><SheetIcon kind="save" /></ToolButton>
        <ToolButton $width={60}><SheetIcon kind="form" /></ToolButton>
        <ToolButton $width={62}><SheetIcon kind="report" /></ToolButton>
        <ToolButton $width={60}><SheetIcon kind="grid" /></ToolButton>
        <ToolDivider />
        <ToolButton><CheckIcon /></ToolButton>
        <ToolButton><CrossIcon /></ToolButton>
      </Toolbar>
      <Body>
        <FilterPanel>
          <FilterField>
            <span>Tipo Movimento</span>
            <output>Contas a Receber</output>
          </FilterField>
          <FilterField>
            <label htmlFor="documento">Nro Documento</label>
            <input id="documento" defaultValue="0000005454" />
          </FilterField>
        </FilterPanel>
        <Tabs>
          <Tab $active>Informações Documento</Tab>
          <Tab>Lavoura</Tab>
        </Tabs>
        <Upper>
          <Tools items={UPPER_TOOLS} />
          <UpperGrid>
            <PlainTable>
              <colgroup>
                <Col $width={11} />
                <Col />
              </colgroup>
              <thead>
                <tr><th /><th>Tipo Documento</th></tr>
              </thead>
              <tbody>
                <tr><td>▶</td><td /></tr>
              </tbody>
            </PlainTable>
            <Records><span>1 Registros</span></Records>
          </UpperGrid>
          <UpperGrid />
        </Upper>
        <Splitter />
        <Lower>
          <Tools items={LOWER_TOOLS} columns={2} />
          <LowerMain>
            <Tabs $boxed>
              <Tab $boxed $active><u>1</u> Parcelas</Tab>
              <Tab $boxed><u>2</u> Informações</Tab>
            </Tabs>
            <Installments>
              <BlueTable>
                <colgroup>
                  <Col $width={11} />
                  <Col $width={73} />
                  <Col />
                  <Col $width={112} />
                  <Col $width={36} />
                </colgroup>
                <thead>
                  <tr>
                    <th>⁝</th>
                    <th>Parcela</th>
                    <th>Sub</th>
                    <th>Desconto Pré-Fixado</th>
                    <th>$ Multa</th>
                  </tr>
                </thead>
                <tbody>
                  <tr><td>▶</td><td>1</td><td /><td>0</td><td /></tr>
                </tbody>
              </BlueTable>
              <Totals />
            </Installments>
          </LowerMain>
        </Lower>
        <StateBar>
          <Cell $width={25}><YellowLed /></Cell>
          <Cell $width={74}>Alteração</Cell>
          <Cell>
            <Player>
              <Svg size={10} box={10}><path d="M1 1l8 4-8 4z" fill="#aaa" stroke="#777" /></Svg>
              <Svg size={10} box={10}><path d="M0 1l7 4-7 4zM9 1v8" fill="#aaa" stroke="#777" /></Svg>
            </Player>
          </Cell>
        </StateBar>
      </Body>
    </MainWindow>
    <StatusBar>
      <StatusCell $first $width={120} $pad={7}>26/6/2024 Jun/2024</StatusCell>
      <Social>
        <a href="#suporte" aria-label="Suporte"><HeadsetIcon /></a>
        <a href="#email">@</a>
        <a href="#instagram" aria-label="Instagram"><FaInstagramSquare size={15} /></a>
        <a href="#linkedin" aria-label="LinkedIn"><FaLinkedinIn size={14} /></a>
        <a href="#youtube" aria-label="YouTube"><FaYoutube size={15} /></a>
        <a href="#twitter" aria-label="Twitter"><FaTwitter size={14} /></a>
        <a href="#facebook" aria-label="Facebook"><FaFacebookSquare size={14} /></a>
        <a href="#teorema" aria-label="Teorema"><BirdIcon /></a>
        <a href="#cursos" aria-label="Cursos"><GraduationIcon /></a>
      </Social>
      <CompanyLink href="#sistemas">Teorema Sistemas</CompanyLink>
      <StatusCell $width={195}>Gestão Administrativa - v.24.05a06.26a</StatusCell>
      <StatusCell $grow>0001 COMPENSA MINERADORA</StatusCell>
      <StatusCell $width={60} $pad={3}>Reg: COMPENSA</StatusCell>
    </StatusBar>
    <Attachments />
    <OpenFile />
    <RemoteHandle aria-label="Controle remoto">
      <Svg size={15}>
        <path d="M0 0h16v16H0z" fill="#14163a" />
        <circle cx="8" cy="8" r="6.500" fill="#c9c9d4" />
        <path d="M2.500 8L6 5v2h4V5l3.500 3L10 11V9H6v2z" fill="#14163a" />
      </Svg>
    </RemoteHandle>
  </Page>
)

export default App
